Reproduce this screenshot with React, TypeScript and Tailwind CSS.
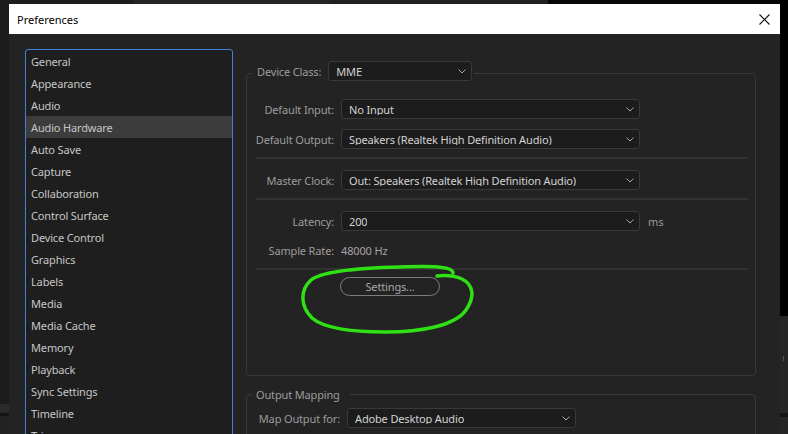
import React from "react";

const categories = [
  "General",
  "Appearance",
  "Audio",
  "Audio Hardware",
  "Auto Save",
  "Capture",
  "Collaboration",
  "Control Surface",
  "Device Control",
  "Graphics",
  "Labels",
  "Media",
  "Media Cache",
  "Memory",
  "Playback",
  "Sync Settings",
  "Timeline",
  "Trim",
];

function Chevron() {
  return (
    <svg width="8" height="5" viewBox="0 0 8 5" className="shrink-0">
      <path d="M0.5 0.5 L4 4 L7.5 0.5" fill="none" stroke="#a9a9a9" strokeWidth="1" />
    </svg>
  );
}

function Dropdown({ value, className }: { value: string; className: string }) {
  return (
    <div
      className={
        "flex h-[20px] shrink-0 items-center justify-between rounded-[3px] border border-[#393939] bg-[#1c1c1c] pl-[7px] pr-[5px] text-[#d2d2d2] " +
        className
      }
    >
      <span className="truncate">{value}</span>
      <Chevron />
    </div>
  );
}

function Row({ label, children }: { label: string; children: React.ReactNode }) {
  return (
    <div className="flex h-[20px] items-center">
      <div className="flex w-[77px] shrink-0 justify-end whitespace-nowrap text-[#9c9c9c]">{label}</div>
      <div className="ml-[7px] flex items-center">{children}</div>
    </div>
  );
}

function Separator() {
  return <div className="h-[2px] bg-[#323232]" />;
}

export default function App() {
  return (
    <div className="relative h-[434px] w-[788px] overflow-hidden bg-black font-['Noto_Sans',sans-serif] text-[11px] leading-none tracking-[-0.15px]">
      <div className="flex h-full">
        {/* left edge of the window behind */}
        <div className="flex w-[9px] shrink-0 flex-col">
          <div className="h-[404px] shrink-0 bg-[#1c1c1c]" />
          <div className="h-[9px] shrink-0 bg-[#2a2a2a]" />
          <div className="h-[3px] shrink-0 bg-[#141414]" />
          <div className="flex-1 bg-[#222222]" />
        </div>

        <div className="flex w-[771px] shrink-0 flex-col">
          <div className="flex h-[4px] shrink-0">
            <div className="w-[124px] bg-[#1c1c1c]" />
            <div className="w-[197px] bg-[#242424]" />
            <div className="w-[218px] bg-[#202020]" />
            <div className="flex-1 bg-[#070707]" />
          </div>

          {/* title bar */}
          <div className="flex h-[30px] shrink-0 items-center justify-between bg-white pl-[8px] pr-[10px]">
            <span className="text-[11px] tracking-normal text-black">Preferences</span>
            <svg width="11" height="11" viewBox="0 0 11 11">
              <path d="M0.5 0.5 L10.5 10.5 M10.5 0.5 L0.5 10.5" stroke="#111" strokeWidth="1.1" />
            </svg>
          </div>

          {/* body */}
          <div className="flex min-h-0 flex-1 gap-[13px] overflow-hidden bg-[#232323] pl-[16px] pt-[15px]">
            <div className="h-[400px] w-[208px] shrink-0 rounded-[3px] border border-[#3d85d6] bg-[#1e1e1e]">
              {categories.map((c) => (
                <div
                  key={c}
                  className={
                    "flex h-[22px] items-center pl-[5px] text-[#c6c6c6] " +
                    (c === "Audio Hardware" ? "bg-[#3c3c3c]" : "")
                  }
                >
                  {c}
                </div>
              ))}
            </div>

            <div className="flex w-[510px] shrink-0 flex-col pt-[12px]">
              <fieldset className="h-[315px] shrink-0 rounded-[4px] border border-[#393939]">
                <legend className="ml-[5px] pl-[5px] pr-[2px]">
                  <div className="flex h-[24px] items-start">
                    <span className="mt-[5px] whitespace-nowrap text-[#9c9c9c]">Device Class:</span>
                    <Dropdown value="MME" className="ml-[7px] w-[144px]" />
                  </div>
                </legend>
                <div className="flex flex-col pl-[10px] pr-[7px] pt-[14px]">
                  <Row label="Default Input:">
                    <Dropdown value="No Input" className="w-[299px]" />
                  </Row>
                  <div className="mt-[10px]">
                    <Row label="Default Output:">
                      <Dropdown value="Speakers (Realtek High Definition Audio)" className="w-[299px]" />
                    </Row>
                  </div>
                  <div className="mt-[8px] -ml-px">
                    <Separator />
                  </div>
                  <div className="mt-[11px]">
                    <Row label="Master Clock:">
                      <Dropdown value="Out: Speakers (Realtek High Definition Audio)" className="w-[299px]" />
                    </Row>
                  </div>
                  <div className="mt-[8px] -ml-px">
                    <Separator />
                  </div>
                  <div className="mt-[11px]">
                    <Row label="Latency:">
                      <Dropdown value="200" className="w-[299px]" />
                      <span className="ml-[8px] text-[#9c9c9c]">ms</span>
                    </Row>
                  </div>
                  <div className="mt-[9px]">
                    <Row label="Sample Rate:">
                      <span className="whitespace-nowrap text-[#a3a3a3]">48000 Hz</span>
                    </Row>
                  </div>
                  <div className="mt-[8px] -ml-px">
                    <Separator />
                  </div>
                  <div className="mt-[7px] ml-[83px]">
                    <div className="flex h-[19px] w-[100px] items-center justify-center rounded-full border border-[#7c7c7c] text-[#a8a8a8]">
                      Settings...
                    </div>
                  </div>
                </div>
              </fieldset>

              <fieldset className="mt-[10px] h-[80px] shrink-0 rounded-[4px] border border-[#393939]">
                <legend className="ml-[5px] pl-[4px] pr-[10px]">
                  <div className="flex h-[16px] items-center whitespace-nowrap text-[#9c9c9c]">Output Mapping</div>
                </legend>
                <div className="flex items-center pl-[10px] pt-[6px]">
                  <div className="flex w-[83px] shrink-0 justify-end whitespace-nowrap text-[#9c9c9c]">
                    Map Output for:
                  </div>
                  <Dropdown value="Adobe Desktop Audio" className="ml-[7px] w-[229px]" />
                </div>
              </fieldset>
            </div>
          </div>
        </div>

        {/* right edge of the window behind */}
        <div className="flex w-[8px] shrink-0 flex-col">
          <div className="h-[316px] shrink-0 bg-black" />
          <div className="flex h-[97px] shrink-0 flex-col bg-[#262626] pl-[3px] pt-[40px]">
            <div className="h-[5px] w-px bg-[#555]" />
          </div>
          <div className="h-[4px] shrink-0 bg-[#141414]" />
          <div className="flex-1 bg-[#262626]" />
        </div>
      </div>

      {/* green marker scribble drawn over the screenshot */}
      <svg className="pointer-events-none absolute left-0 top-0" width="788" height="434" viewBox="0 0 788 434">
        <path
          d="M453 273 C453 266 430 266 400 267 C360 268 322 271 311 280 C300 290 300 306 312 318 C326 330 360 332 386 332 C420 332 455 326 466 310 C475 297 474 285 462 279 C455 276 446 275 437 276"
          fill="none"
          stroke="#2fe014"
          strokeWidth="3.5"
          strokeLinecap="round"
          strokeLinejoin="round"
        />
      </svg>
    </div>
  );
}
